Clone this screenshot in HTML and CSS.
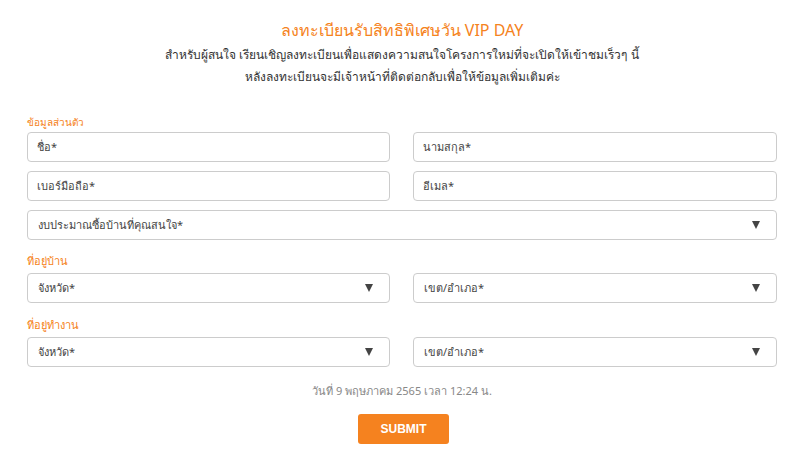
FILE: index.html
```html
<!DOCTYPE html>
<html lang="th">
<head>
<meta charset="utf-8">
<link rel="stylesheet" href="styles.css">
</head>
<body>
<div class="page">
  <header class="intro">
    <h1 class="title">ลงทะเบียนรับสิทธิพิเศษวัน VIP DAY</h1>
    <p class="desc">สำหรับผู้สนใจ เรียนเชิญลงทะเบียนเพื่อแสดงความสนใจโครงการใหม่ที่จะเปิดให้เข้าชมเร็วๆ นี้<br>หลังลงทะเบียนจะมีเจ้าหน้าที่ติดต่อกลับเพื่อให้ข้อมูลเพิ่มเติมค่ะ</p>
  </header>
  <form class="form">
    <div class="label small">ข้อมูลส่วนตัว</div>
    <div class="grid">
      <div class="field">ชื่อ*</div>
      <div class="field">นามสกุล*</div>
      <div class="field">เบอร์มือถือ*</div>
      <div class="field">อีเมล*</div>
      <div class="field select wide"><span>งบประมาณซื้อบ้านที่คุณสนใจ*</span><i class="arrow"></i></div>
    </div>
    <div class="label">ที่อยู่บ้าน</div>
    <div class="grid">
      <div class="field select"><span>จังหวัด*</span><i class="arrow"></i></div>
      <div class="field select"><span>เขต/อำเภอ*</span><i class="arrow"></i></div>
    </div>
    <div class="label work">ที่อยู่ทำงาน</div>
    <div class="grid">
      <div class="field select"><span>จังหวัด*</span><i class="arrow"></i></div>
      <div class="field select"><span>เขต/อำเภอ*</span><i class="arrow"></i></div>
    </div>
    <div class="date">วันที่ 9 พฤษภาคม 2565 เวลา 12:24 น.</div>
    <div class="actions"><button type="button" class="submit">SUBMIT</button></div>
  </form>
</div>
</body>
</html>
```
FILE: styles.css
```css
* { box-sizing: border-box; }
html, body { margin: 0; padding: 0; background: #fff; }
body {
  font-family: "Noto Sans", "DejaVu Sans", sans-serif;
  color: #333;
}
.page {
  width: 750px;
  margin-left: 27px;
  padding-top: 18px;
}
.intro { text-align: center; }
.title {
  margin: 0;
  font-size: 16px;
  font-weight: normal;
  line-height: 24px;
  color: #f58220;
}
.desc {
  margin: 2px 0 0;
  font-size: 12px;
  line-height: 22px;
  color: #333;
}
.form { margin-top: 27px; }
.label {
  font-size: 11px;
  line-height: 16px;
  color: #f58220;
  margin: 13px 0 4px;
}
.label.work { margin-top: 14px; }
.label.small { font-size: 10px; margin: 0 0 3px; line-height: 14px; }
.grid {
  display: grid;
  grid-template-columns: 363px 364px;
  column-gap: 23px;
  row-gap: 9px;
}
.wide { grid-column: 1 / -1; }
.field {
  height: 30px;
  border: 1px solid #ccc;
  border-radius: 4px;
  padding: 0 9px;
  display: flex;
  align-items: center;
  font-size: 11px;
  color: #444;
  background: #fff;
}
.select {
  justify-content: space-between;
  padding: 0 16px 0 10px;
}
.arrow {
  width: 0;
  height: 0;
  border-left: 4.5px solid transparent;
  border-right: 4.5px solid transparent;
  border-top: 8px solid #444;
}
.date {
  text-align: center;
  font-size: 11px;
  color: #888;
  margin-top: 16px;
  line-height: 16px;
}
.actions {
  display: flex;
  justify-content: center;
  margin-top: 15px;
}
.submit {
  width: 91px;
  height: 30px;
  border: none;
  border-radius: 3px;
  background: #f5821f;
  color: #fff;
  font-family: "Liberation Sans", Arial, sans-serif;
  font-weight: bold;
  font-size: 12px;
  margin-left: 3px;
}
```
